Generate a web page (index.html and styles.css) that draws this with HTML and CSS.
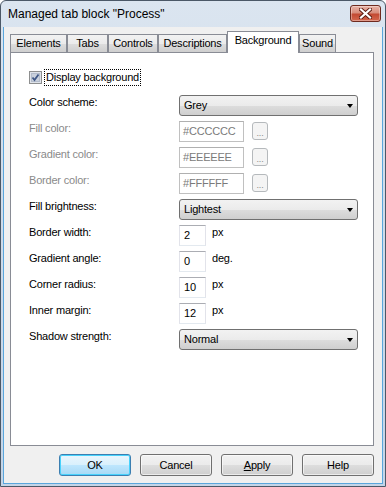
FILE: index.html
```html
<!DOCTYPE html>
<html lang="en">
<head>
    <meta charset="UTF-8">
    <title>Managed tab block "Process"</title>
    <link rel="stylesheet" href="styles.css">
</head>
<body>
    <div class="window">
        <div class="titlebar">
            <span class="title">Managed tab block "Process"</span>
            <button class="close-btn" aria-label="Close">
                <svg width="13" height="11" viewBox="0 0 13 11">
                    <path d="M2 1.5 L11 9.5 M11 1.5 L2 9.5" stroke="#5a1a10" stroke-width="4" stroke-linecap="square"/>
                    <path d="M2 1.5 L11 9.5 M11 1.5 L2 9.5" stroke="#ffffff" stroke-width="2.2" stroke-linecap="square"/>
                </svg>
            </button>
        </div>

        <div class="client">
            <div class="tabs">
                <div class="tab">Elements</div>
                <div class="tab">Tabs</div>
                <div class="tab">Controls</div>
                <div class="tab">Descriptions</div>
                <div class="tab active">Background</div>
                <div class="tab">Sound</div>
            </div>

            <div class="panel">
                <div class="check-row">
                    <span class="checkbox">
                        <svg width="13" height="13" viewBox="0 0 13 13">
                            <rect x="0.5" y="0.5" width="12" height="12" fill="#dfe3ea" stroke="#8e8f8f"/>
                            <rect x="2.5" y="2.5" width="8" height="8" fill="#c9d0dc" stroke="#b3bccb"/>
                            <path d="M3.5 6.5 L5.5 9 L9.5 3.5" fill="none" stroke="#3f5786" stroke-width="1.8"/>
                        </svg>
                    </span>
                    <span class="check-label">Display background</span>
                </div>

                <div class="form-grid">
                    <div class="field-label">Color scheme:</div>
                    <div class="field"><div class="select">Grey<span class="arrow"></span></div></div>

                    <div class="field-label disabled">Fill color:</div>
                    <div class="field">
                        <div class="textbox disabled">#CCCCCC</div>
                        <div class="dots-btn">...</div>
                    </div>

                    <div class="field-label disabled">Gradient color:</div>
                    <div class="field">
                        <div class="textbox disabled">#EEEEEE</div>
                        <div class="dots-btn">...</div>
                    </div>

                    <div class="field-label disabled">Border color:</div>
                    <div class="field">
                        <div class="textbox disabled">#FFFFFF</div>
                        <div class="dots-btn">...</div>
                    </div>

                    <div class="field-label">Fill brightness:</div>
                    <div class="field"><div class="select">Lightest<span class="arrow"></span></div></div>

                    <div class="field-label">Border width:</div>
                    <div class="field"><div class="textbox small">2</div><span class="unit">px</span></div>

                    <div class="field-label">Gradient angle:</div>
                    <div class="field"><div class="textbox small">0</div><span class="unit">deg.</span></div>

                    <div class="field-label">Corner radius:</div>
                    <div class="field"><div class="textbox small">10</div><span class="unit">px</span></div>

                    <div class="field-label">Inner margin:</div>
                    <div class="field"><div class="textbox small">12</div><span class="unit">px</span></div>

                    <div class="field-label">Shadow strength:</div>
                    <div class="field"><div class="select">Normal<span class="arrow"></span></div></div>
                </div>
            </div>

            <div class="buttons">
                <button class="btn default">OK</button>
                <button class="btn">Cancel</button>
                <button class="btn"><u>A</u>pply</button>
                <button class="btn">Help</button>
            </div>
        </div>
    </div>
</body>
</html>
```

FILE: styles.css
```css
/* Reset */
* {
    margin: 0;
    padding: 0;
    box-sizing: border-box;
}

body {
    font-family: 'Liberation Sans', Arial, sans-serif;
    font-size: 11px;
    letter-spacing: -0.2px;
    color: #000;
    background: #ffffff;
}

.window {
    width: 386px;
    height: 487px;
    display: flex;
    flex-direction: column;
    border: 1px solid #4b5867;
    border-radius: 6px 6px 0 0;
    background: linear-gradient(to bottom, #dbe5f0 0%, #cfdcea 40%, #c4d5e8 100%);
}

.titlebar {
    height: 26px;
    display: flex;
    align-items: flex-start;
    justify-content: space-between;
    padding: 0 4px 0 7px;
}

.title {
    font-size: 12px;
    letter-spacing: 0;
    line-height: 26px;
    color: #000;
}

.close-btn {
    width: 31px;
    height: 17px;
    margin-top: 4px;
    border: 1px solid #6e2a1f;
    border-radius: 3px;
    background: linear-gradient(to bottom, #e8b3a7 0%, #d88d7c 45%, #c34a33 55%, #d4674e 100%);
    display: flex;
    align-items: center;
    justify-content: center;
    box-shadow: inset 0 0 0 1px rgba(255, 255, 255, 0.35);
}

.client {
    flex: 1;
    margin: 0 2px 2px;
    display: flex;
    flex-direction: column;
    padding: 4px 8px 7px 6px;
    background: #f0f0f0;
    border-left: 1px solid #5aa6dc;
    border-right: 1px solid #5aa6dc;
    border-bottom: 1px solid #5aa6dc;
}

/* Tabs */
.tabs {
    height: 21px;
    display: flex;
    align-items: flex-end;
    padding-left: 0;
    position: relative;
    z-index: 1;
}

.tab {
    height: 18px;
    line-height: 16px;
    text-align: center;
    border: 1px solid #898c95;
    border-bottom: none;
    background: linear-gradient(to bottom, #f2f2f2 0%, #ebebeb 50%, #dddddd 51%, #cfcfcf 100%);
}

.tab:nth-child(1) { width: 57px; }
.tab:nth-child(2) { width: 41px; }
.tab:nth-child(3) { width: 50px; }
.tab:nth-child(4) { width: 69px; }
.tab:nth-child(5) { width: 72px; }
.tab:nth-child(6) { width: 37px; }

.tab.active {
    height: 22px;
    margin-bottom: -1px;
    line-height: 17px;
    background: #ffffff;
}

.panel {
    flex: 1;
    background: #ffffff;
    border: 1px solid #898c95;
    padding: 16px 16px 0 18px;
}

.check-row {
    height: 17px;
    display: flex;
    align-items: center;
}

.checkbox {
    width: 13px;
    height: 13px;
    display: block;
}

.checkbox svg {
    display: block;
}

.check-label {
    margin-left: 2px;
    padding: 0 1px;
    line-height: 15px;
    border: 1px dotted #000;
}

.form-grid {
    margin-top: 9px;
    display: grid;
    grid-template-columns: 150px 179px;
    grid-auto-rows: 21px;
    row-gap: 5px;
}

.field-label {
    line-height: 15px;
}

.field-label.disabled {
    color: #8a8a8a;
}

.field {
    display: flex;
    align-items: flex-start;
}

.select {
    position: relative;
    width: 179px;
    height: 21px;
    line-height: 19px;
    padding-left: 4px;
    border: 1px solid #707070;
    border-radius: 3px;
    background: linear-gradient(to bottom, #f2f2f2 0%, #ebebeb 50%, #dddddd 51%, #cfcfcf 100%);
}

.arrow {
    position: absolute;
    right: 4px;
    top: 8px;
    width: 0;
    height: 0;
    border-left: 3.5px solid transparent;
    border-right: 3.5px solid transparent;
    border-top: 4px solid #000;
}

.textbox {
    width: 65px;
    height: 21px;
    line-height: 19px;
    padding-left: 3px;
    background: #ffffff;
    border: 1px solid #e2e3ea;
    border-top-color: #abadb3;
    border-bottom-color: #e3e9ef;
}

.textbox.disabled {
    color: #7a7a7a;
    border-color: #c0c0c0;
    border-top-color: #b0b0b0;
}

.textbox.small {
    width: 27px;
    padding-left: 4px;
}

.dots-btn {
    width: 16px;
    height: 18px;
    margin: 1px 0 0 8px;
    line-height: 20px;
    text-align: center;
    font-size: 9px;
    color: #8a8a8a;
    border: 1px solid #b5b9bc;
    border-radius: 3px;
    background: #f4f4f4;
}

.unit {
    margin-left: 6px;
    line-height: 15px;
}

/* Buttons */
.buttons {
    margin-top: 8px;
    display: flex;
    justify-content: flex-end;
    gap: 9px;
}

.btn {
    width: 72px;
    height: 22px;
    font-family: 'Liberation Sans', Arial, sans-serif;
    font-size: 11px;
    letter-spacing: -0.2px;
    color: #000;
    border: 1px solid #707070;
    border-radius: 3px;
    background: linear-gradient(to bottom, #f2f2f2 0%, #ebebeb 50%, #dddddd 51%, #cfcfcf 100%);
    box-shadow: inset 0 0 0 1px rgba(255, 255, 255, 0.6);
}

.btn u {
    text-decoration: underline;
}

.btn.default {
    border-color: #3c7fb1;
    background: linear-gradient(to bottom, #eaf6fd 0%, #d9f0fc 50%, #bee6fd 51%, #a7d9f5 100%);
    box-shadow: inset 0 0 0 1px #48d2fc;
}
```
